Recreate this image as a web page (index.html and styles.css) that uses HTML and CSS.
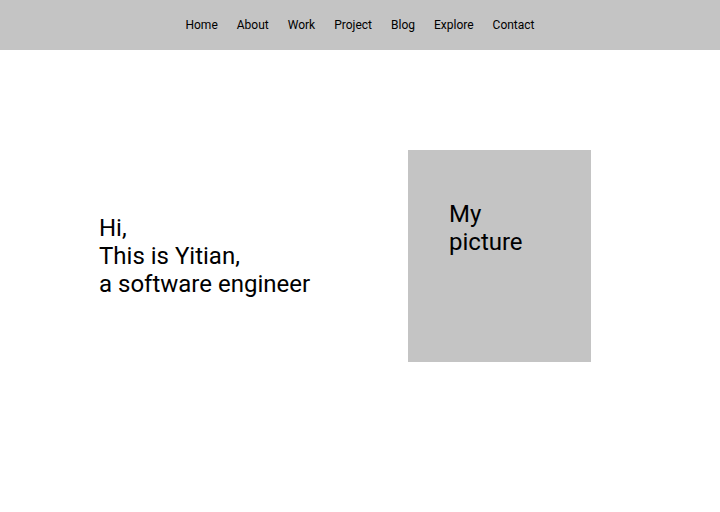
FILE: index.html
```html
<!DOCTYPE html>
<html>
<head>
<meta charset="utf-8">
<link rel="stylesheet" href="styles.css">
</head>
<body>
<nav class="nav">
  <a class="nav-link">Home</a>
  <a class="nav-link">About</a>
  <a class="nav-link">Work</a>
  <a class="nav-link">Project</a>
  <a class="nav-link">Blog</a>
  <a class="nav-link">Explore</a>
  <a class="nav-link">Contact</a>
</nav>
<main class="hero">
  <div class="intro">Hi,<br>This is Yitian,<br>a software engineer</div>
  <div class="picture">My<br>picture</div>
</main>
</body>
</html>
```
FILE: styles.css
```css
* { box-sizing: border-box; }
html, body { margin: 0; padding: 0; background: #fff; }
body { font-family: Roboto, "Noto Sans", sans-serif; color: #000; }
.nav {
  height: 50px;
  background: #c4c4c4;
  display: flex;
  justify-content: center;
  align-items: center;
  gap: 19px;
  font-size: 12px;
}
.nav-link { color: #000; text-decoration: none; }
.hero {
  display: flex;
  justify-content: space-between;
  align-items: center;
  padding: 100px 129px 0 99px;
}
.intro {
  font-size: 24px;
  line-height: 28px;
}
.picture {
  width: 183px;
  height: 212px;
  background: #c4c4c4;
  font-size: 24px;
  line-height: 28px;
  padding: 50px 0 0 41px;
}
```
